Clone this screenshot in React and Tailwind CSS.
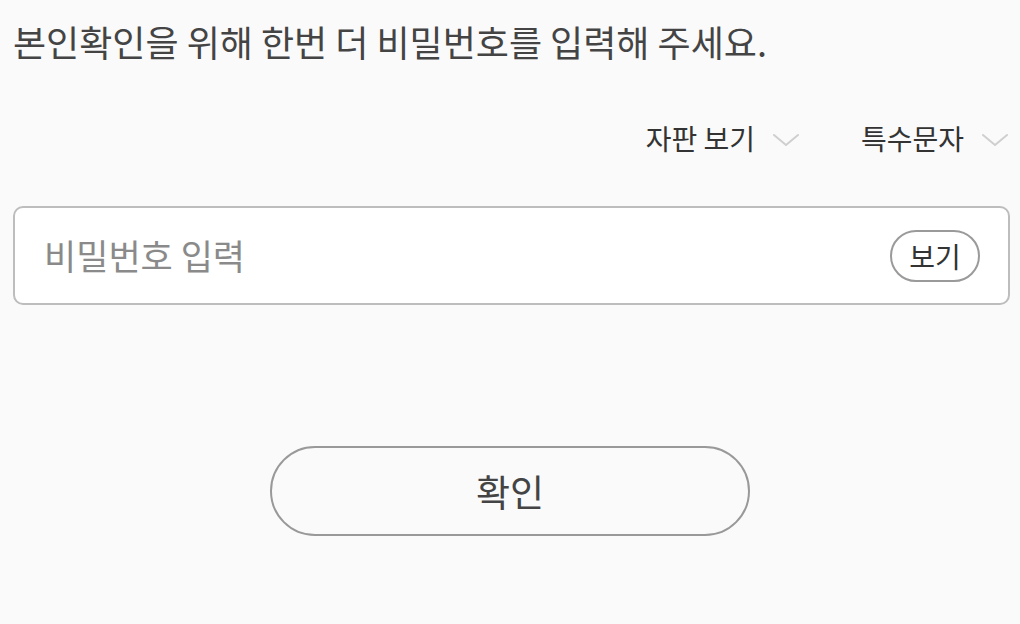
import React from "react";

const Chevron = () => (
  <svg width="26" height="14" viewBox="0 0 26 14" fill="none" className="ml-[18px] mt-[4px]">
    <path d="M1 2 L13 12 L25 2" stroke="#cfcfcf" strokeWidth="2" strokeLinecap="round" strokeLinejoin="round" />
  </svg>
);

export default function App() {
  return (
    <div
      className="min-h-[624px] w-[1020px] bg-[#fafafa] pl-[13px] pr-[10px]"
      style={{ fontFamily: '"Noto Sans CJK KR", "Noto Sans", sans-serif' }}
    >
      <div className="h-[86px] flex items-center pb-[4px] text-[36px] text-[#444] leading-none">
        본인확인을 위해 한번 더 비밀번호를 입력해 주세요.
      </div>
      <div className="h-[104px] flex items-center justify-end pr-[2px] text-[28px] text-[#333] leading-none">
        <div className="flex items-center">
          자판 보기
          <Chevron />
        </div>
        <div className="flex items-center ml-[62px]">
          특수문자
          <Chevron />
        </div>
      </div>
      <div className="mt-[16px] h-[99px] flex items-center justify-between rounded-[10px] border-2 border-[#bdbdbd] bg-white pl-[29px] pr-[28px]">
        <span className="text-[35px] text-[#8a8a8a] leading-none pb-[3px]">비밀번호 입력</span>
        <button className="h-[52px] w-[90px] rounded-full border-2 border-[#9a9a9a] text-[28px] text-[#333] leading-none">
          보기
        </button>
      </div>
      <div className="mt-[141px] flex justify-center pr-[3px]">
        <button className="h-[90px] w-[480px] rounded-full border-2 border-[#999] text-[37px] text-[#444] leading-none">
          확인
        </button>
      </div>
    </div>
  );
}
